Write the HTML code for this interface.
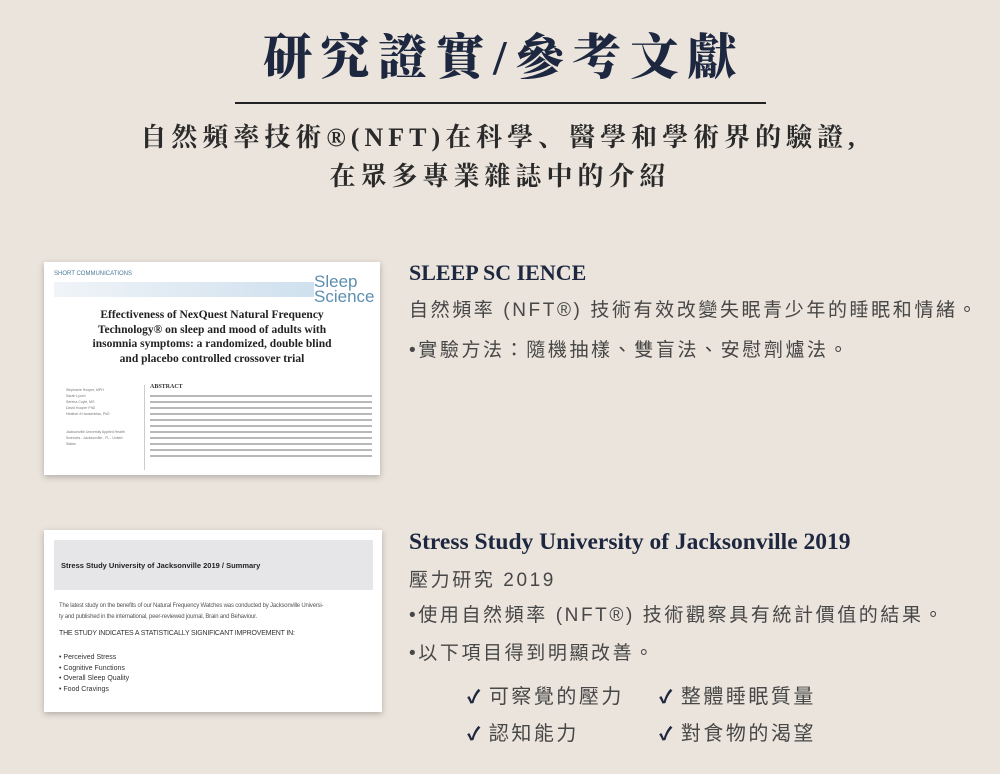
<!DOCTYPE html>
<html><head><meta charset="utf-8"><style>
*{margin:0;padding:0;box-sizing:border-box}
body{width:1000px;height:774px;background:#ebe4dc;position:relative;overflow:hidden;font-family:"Liberation Sans","Noto Sans CJK TC",sans-serif}
.abs{position:absolute}
.serif{font-family:"Liberation Serif","Noto Serif CJK SC",serif}
h1{position:absolute;left:0;width:1000px;top:26px;text-align:center;font-size:49px;letter-spacing:8.5px;color:#1d2740;font-weight:900;line-height:64px;padding-left:8px}
.sub{left:0;width:1000px;text-align:center;font-size:26px;letter-spacing:5px;color:#2a2a2a;font-weight:700;line-height:36px}
.cn{font-size:19px;letter-spacing:2.6px;color:#474747;line-height:26px;white-space:nowrap}
.card{background:#fff;box-shadow:0 2px 6px rgba(0,0,0,.25)}
.chk{font-size:20px;letter-spacing:2.5px;color:#474747;white-space:nowrap}
.chk b{color:#1d2740;font-size:18px;margin-right:6px;font-weight:900}
</style></head><body>
<h1 class="serif">研究證實/參考文獻</h1>
<div class="abs" style="left:235px;top:102px;width:531px;height:2px;background:#222"></div>
<div class="abs sub serif" style="top:120px">自然頻率技術®(NFT)在科學、醫學和學術界的驗證,</div>
<div class="abs sub serif" style="top:159px">在眾多專業雜誌中的介紹</div>

<div class="abs card" style="left:44px;top:262px;width:336px;height:213px">
 <div class="abs" style="left:10px;top:9px;font-size:6px;color:#4a7a9a">SHORT COMMUNICATIONS</div>
 <div class="abs" style="left:10px;top:20px;width:260px;height:15px;background:linear-gradient(90deg,#f0f4f8,#cfe0ee)"></div>
 <div class="abs" style="left:270px;top:12px;font-size:17px;line-height:15px;color:#5d8fb0">Sleep<br>Science</div>
 <div class="abs serif" style="left:0;width:336px;top:46px;text-align:center;font-size:11.5px;line-height:14.5px;color:#222;font-weight:bold">Effectiveness of NexQuest Natural Frequency<br>Technology® on sleep and mood of adults with<br>insomnia symptoms: a randomized, double blind<br>and placebo controlled crossover trial</div>
 <div class="abs" style="left:22px;top:125px;width:60px;font-size:3.5px;line-height:6px;color:#777">Stephanie Hooper, MPH<br>Sarah Lynch<br>Serena Coyle, MS<br>David Hooper PhD<br>Heather A Hausenblas, PhD<br><br><br>Jacksonville University Applied Health Sciences - Jacksonville - FL - United States</div>
 <div class="abs" style="left:100px;top:123px;width:1px;height:85px;background:#ccc"></div>
 <div class="abs serif" style="left:106px;top:122px;font-size:6px;font-weight:bold;color:#333">ABSTRACT</div>
 <div class="abs" style="left:106px;top:131px;width:222px;height:68px;background:repeating-linear-gradient(#fff 0,#fff 2px,#b8b8b8 2px,#b8b8b8 4px,#fff 4px,#fff 6px)"></div>
</div>

<div class="abs card" style="left:44px;top:530px;width:338px;height:182px">
 <div class="abs" style="left:10px;top:10px;width:319px;height:50px;background:#e6e6e8"></div>
 <div class="abs" style="left:17px;top:31px;font-size:7.5px;color:#222;font-weight:bold">Stress Study University of Jacksonville 2019 / Summary</div>
 <div class="abs" style="left:15px;top:71px;width:315px;font-size:6px;line-height:11px;color:#555;letter-spacing:-.2px">The latest study on the benefits of our Natural Frequency Watches was conducted by Jacksonville Universi-<br>ty and published in the international, peer-reviewed journal, Brain and Behaviour.</div>
 <div class="abs" style="left:15px;top:100px;font-size:7px;color:#333;letter-spacing:-.2px">THE STUDY INDICATES A STATISTICALLY SIGNIFICANT IMPROVEMENT IN:</div>
 <div class="abs" style="left:15px;top:123px;font-size:7px;line-height:10.5px;color:#333">• Perceived Stress<br>• Cognitive Functions<br>• Overall Sleep Quality<br>• Food Cravings</div>
</div>

<div class="abs serif" style="left:409px;top:260px;font-size:22px;font-weight:bold;color:#1d2740">SLEEP SC IENCE</div>
<div class="abs cn" style="left:409px;top:298px">自然頻率 (NFT®) 技術有效改變失眠青少年的睡眠和情緒。</div>
<div class="abs cn" style="left:409px;top:338px">•實驗方法：隨機抽樣、雙盲法、安慰劑爐法。</div>

<div class="abs serif" style="left:409px;top:529px;font-size:23.5px;font-weight:bold;color:#1d2740">Stress Study University of Jacksonville 2019</div>
<div class="abs cn" style="left:409px;top:568px">壓力研究 2019</div>
<div class="abs cn" style="left:409px;top:603px">•使用自然頻率 (NFT®) 技術觀察具有統計價值的結果。</div>
<div class="abs cn" style="left:409px;top:641px">•以下項目得到明顯改善。</div>

<div class="abs chk" style="left:467px;top:680px"><b>✓</b>可察覺的壓力</div>
<div class="abs chk" style="left:659px;top:680px"><b>✓</b>整體睡眠質量</div>
<div class="abs chk" style="left:467px;top:717px"><b>✓</b>認知能力</div>
<div class="abs chk" style="left:659px;top:717px"><b>✓</b>對食物的渴望</div>
</body></html>
